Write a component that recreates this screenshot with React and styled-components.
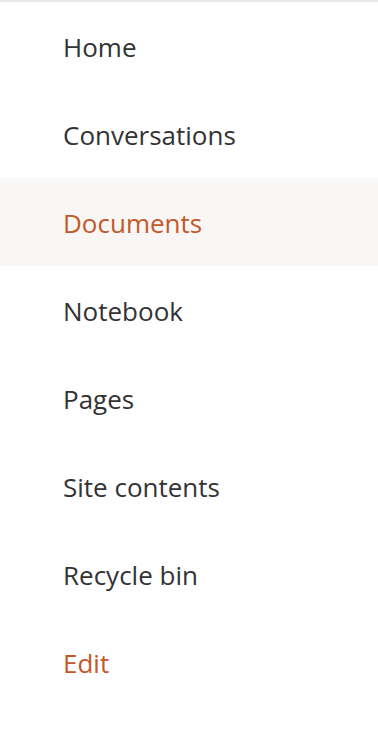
import React from 'react'
import styled, { createGlobalStyle } from 'styled-components'

const Global = createGlobalStyle`
  html, body {
    margin: 0;
    padding: 0;
    background: #fff;
  }
  body {
    font-family: 'Open Sans', 'Noto Sans', sans-serif;
  }
`

const items = [
  { label: 'Home' },
  { label: 'Conversations' },
  { label: 'Documents', active: true },
  { label: 'Notebook' },
  { label: 'Pages' },
  { label: 'Site contents' },
  { label: 'Recycle bin' },
  { label: 'Edit', action: true }
]

const App = () => {
  return (
    <>
      <Global />
      <Nav>
        {items.map(item => (
          <Row key={item.label} $active={item.active}>
            <Label $accent={item.active || item.action}>{item.label}</Label>
          </Row>
        ))}
      </Nav>
    </>
  )
}

export default App

//styles

const Nav = styled.nav`
  width: 378px;
  min-height: 732px;
  border-top: 2px solid #e8e8e8;
  display: flex;
  flex-direction: column;
  box-sizing: border-box;
`
const Row = styled.div`
  height: 88px;
  box-sizing: border-box;
  padding: 1px 0 0 63px;
  display: flex;
  align-items: center;
  background-color: ${p => (p.$active ? '#f8f7f5' : '#fff')};
`
const Label = styled.span`
  font-size: 26px;
  line-height: 1;
  color: ${p => (p.$accent ? '#c4582a' : '#333333')};
`
